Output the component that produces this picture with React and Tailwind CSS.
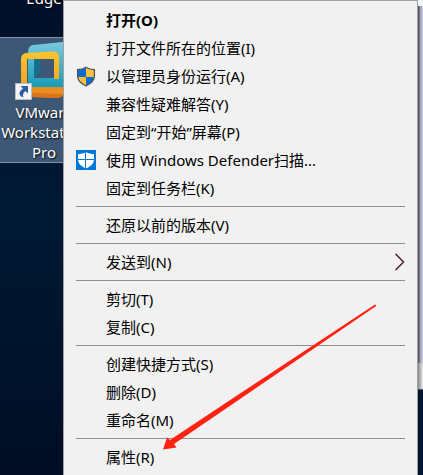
import React from 'react';

const UacShield = () => (
  <svg viewBox="0 0 20 21" className="w-5 h-[21px]" aria-hidden="true">
    <clipPath id="uac">
      <path d="M10 1.6C7.6 3.2 4.8 3.8 2 3.9v6.2c0 4.4 3.2 7.3 8 9.5 4.8-2.2 8-5.1 8-9.5V3.9C15.2 3.8 12.4 3.2 10 1.6z" />
    </clipPath>
    <g clipPath="url(#uac)">
      <rect width="10" height="11" fill="#0a6cce" />
      <rect x="10" width="10" height="11" fill="#ffbe3b" />
      <rect y="11" width="10" height="10" fill="#ffbe3b" />
      <rect x="10" y="11" width="10" height="10" fill="#0a6cce" />
    </g>
    <path
      d="M10 1.3C7.6 2.9 4.6 3.6 1.6 3.7v6.4c0 4.6 3.4 7.7 8.4 9.9 5-2.2 8.4-5.3 8.4-9.9V3.7C15.4 3.6 12.4 2.9 10 1.3z"
      fill="none"
      stroke="#4d5359"
      strokeWidth="1.3"
    />
  </svg>
);

const DefenderIcon = () => (
  <svg viewBox="0 0 20 20" className="w-5 h-5" aria-hidden="true">
    <rect width="20" height="20" fill="#0078d7" />
    <path d="M10 2C7.8 3.5 5 4.1 2 4.2V9c0 4.5 3.3 7.4 8 9.5 4.7-2.1 8-5 8-9.5V4.2C15 4.1 12.2 3.5 10 2z" fill="#fff" />
    <path d="M9.5 1v18M1 9.5h18" stroke="#0078d7" strokeWidth="1" />
  </svg>
);

const groups = [
  [
    { label: '打开(O)', bold: true },
    { label: '打开文件所在的位置(I)' },
    { label: '以管理员身份运行(A)', icon: <UacShield /> },
    { label: '兼容性疑难解答(Y)' },
    { label: '固定到“开始”屏幕(P)' },
    { label: '使用 Windows Defender扫描...', icon: <DefenderIcon /> },
    { label: '固定到任务栏(K)' },
  ],
  [{ label: '还原以前的版本(V)' }],
  [{ label: '发送到(N)', submenu: true }],
  [{ label: '剪切(T)' }, { label: '复制(C)' }],
  [{ label: '创建快捷方式(S)' }, { label: '删除(D)' }, { label: '重命名(M)' }],
  [{ label: '属性(R)' }],
];

const MenuItem = ({ item }) => (
  <button
    type="button"
    role="menuitem"
    className="flex h-7 w-full items-center pl-2 pr-3 text-left hover:bg-white"
  >
    <span className="flex w-[34px] shrink-0 justify-start pl-1">{item.icon}</span>
    <span className={`flex-1 whitespace-nowrap ${item.bold ? 'font-bold' : ''}`}>{item.label}</span>
    {item.submenu && (
      <svg viewBox="0 0 10 18" className="h-[18px] w-[10px]" aria-hidden="true">
        <path d="M1.2 .8l8.200 8.200-8.200 8.200" fill="none" stroke="#7fa8ea" strokeWidth="1" />
        <path d="M.5 1l8 8-8 8" fill="none" stroke="#4a0d0d" strokeWidth="1.1" />
      </svg>
    )}
  </button>
);

const VmwareIcon = () => (
  <svg viewBox="0 0 64 60" className="h-[60px] w-16" aria-hidden="true">
    <defs>
      <linearGradient id="teal" x1="0" y1="0" x2="0" y2="1">
        <stop offset="0" stopColor="#7ccbdc" />
        <stop offset="1" stopColor="#169ab8" />
      </linearGradient>
      <linearGradient id="amber" x1="0" y1="0" x2="0" y2="1">
        <stop offset="0" stopColor="#fcc42c" />
        <stop offset="1" stopColor="#f09a20" />
      </linearGradient>
    </defs>
    {/* back ring */}
    <path
      d="M15 5L54 1q6 0 6 5v36q0 5-6 5H10V12q0-6 5-7zM16 19v19h20V19z"
      fill="url(#teal)"
      fillRule="evenodd"
    />
    <path d="M16 19h6v13l-6 6z" fill="#14708c" />
    {/* front ring */}
    <path d="M9 47h38v4q-1 7-9 7l-24-1q-5-1-5-5z" fill="#ea8f1f" />
    <path d="M9 50l5 7 24 1q6 0 8-4l-31-1z" fill="#d9741a" />
    <path
      d="M8 13l27-1.500q6 0 6 5V39h-5V19H9v29l5 9q-9-1-11-8V19q0-5 5-6z"
      fill="url(#amber)"
    />
  </svg>
);

const ShortcutArrow = () => (
  <svg viewBox="0 0 17 17" className="absolute bottom-0 left-[7px] h-[17px] w-[17px]" aria-hidden="true">
    <rect x=".5" y=".5" width="16" height="16" fill="#f4f4f4" stroke="#b9bcc0" />
    <path d="M5.500 3H13v7.500l-2.500-2.500C8 10 7.500 12 8.500 14.500 3.500 13 3 8.500 8 5.500z" fill="#2b5fa5" />
  </svg>
);

const Desktop = () => (
  <div className="w-[63px] shrink-0 overflow-hidden bg-linear-to-b from-[#000f2a] via-[#001a35] via-45% to-[#000d24] text-white [text-shadow:1px_1px_2px_#000]">
    <div className="flex w-[88px] flex-col text-center">
      <div className="flex h-[37px] flex-col">
        <span className="-mt-3 h-5 leading-5">Edge</span>
      </div>
      <div className="flex h-[126px] flex-col items-center border-y border-[#7f93a8] bg-[#3d5876]">
        <div className="relative mt-[2px] h-[60px] w-[72px] pl-[10px]">
          <VmwareIcon />
          <ShortcutArrow />
        </div>
        <span className="mt-[2px] leading-5">
          VMware
          <br />
          Workstation
          <br />
          Pro
        </span>
      </div>
    </div>
  </div>
);

// sliver of the windows behind the menu
const Backdrop = () => (
  <div className="flex w-[5px] shrink-0 flex-col">
    <div className="h-[6px] bg-[#f3f4fb]" />
    <div className="h-[357px] bg-linear-to-r from-[#444] via-[#a0a3b8] to-[#ccd2ea]" />
    <div className="h-[27px] border-b border-[#555] bg-linear-to-r from-[#888] to-[#eee]" />
    <div className="flex-1 bg-[#001631]" />
  </div>
);

const App = () => {
  return (
    <div className="relative flex min-h-screen overflow-hidden bg-[#001631] font-['Noto_Sans','Noto_Sans_CJK_SC',sans-serif] text-[15px] text-black">
      <Desktop />
      <div role="menu" className="flex-1 border border-b-0 border-[#a0a0a0] bg-[#f1f1f1] pt-[5px] pb-1">
        {groups.map((group, i) => (
          <div key={i}>
            {i > 0 && <hr className="mx-3 my-1 border-t border-[#919191]" />}
            {group.map((item) => (
              <MenuItem key={item.label} item={item} />
            ))}
          </div>
        ))}
      </div>
      <Backdrop />

      <svg
        viewBox="0 0 216 148"
        className="pointer-events-none absolute left-[162px] top-[303px] h-[148px] w-[216px]"
        aria-hidden="true"
      >
        <path d="M213 1.500L214.500 2.800 78 96 12 141l2.500 3.500L1 146.500 5 134.500l3 2.500L78 90.500z" fill="#ff2112" />
      </svg>
    </div>
  );
};

export default App;
